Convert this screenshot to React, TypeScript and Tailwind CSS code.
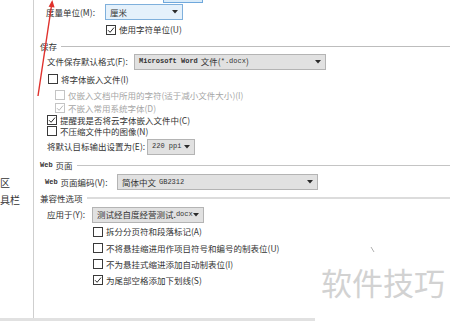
import React from "react";

const cjk = { fontFamily: '"Noto Sans CJK SC", "Noto Sans", sans-serif' };
const mono = { fontFamily: '"Liberation Mono", "DejaVu Sans Mono", monospace' };

function Check({ checked = false, disabled = false }: { checked?: boolean; disabled?: boolean }) {
  return (
    <span
      className={`flex h-[10px] w-[10px] shrink-0 items-center justify-center border bg-white ${
        disabled ? "border-[#c4c4c4]" : "border-[#3a3a3a]"
      }`}
    >
      {checked && (
        <svg width="8" height="8" viewBox="0 0 8 8">
          <path
            d="M1 4.2 L3.1 6.3 L7 1.6"
            fill="none"
            stroke={disabled ? "#b8b8b8" : "#2a2a2a"}
            strokeWidth="1"
          />
        </svg>
      )}
    </span>
  );
}

function Arrow() {
  return (
    <svg width="6" height="4" viewBox="0 0 6 4" className="shrink-0">
      <path d="M0 0 H6 L3 3.5 Z" fill="#2b2b2b" />
    </svg>
  );
}

function Select({
  width,
  active = false,
  children,
}: {
  width: string;
  active?: boolean;
  children: React.ReactNode;
}) {
  return (
    <div
      className={`flex h-[16px] items-center justify-between border pl-[4px] pr-[4px] ${width} ${
        active ? "border-[#7fb0dc] bg-[#e5f1fb]" : "border-[#b4b4b4] bg-[#e1e1e1]"
      }`}
    >
      <span className="flex items-center gap-[3px] whitespace-nowrap">{children}</span>
      <Arrow />
    </div>
  );
}

function CheckRow({
  h,
  ml,
  checked,
  disabled,
  children,
}: {
  h: string;
  ml: string;
  checked?: boolean;
  disabled?: boolean;
  children: React.ReactNode;
}) {
  return (
    <div className={`flex items-center ${h} ${ml}`}>
      <Check checked={checked} disabled={disabled} />
      <span className={`ml-[3px] whitespace-nowrap ${disabled ? "text-[#a6a6a6]" : ""}`}>{children}</span>
    </div>
  );
}

function Section({ h, label, line }: { h: string; label: React.ReactNode; line: string }) {
  return (
    <div className={`flex items-center ${h} ml-[6px]`}>
      <span className="whitespace-nowrap">{label}</span>
      <div className={`ml-[4px] flex-1 ${line}`} />
    </div>
  );
}

export default function App() {
  return (
    <div
      className="relative flex h-[321px] w-[450px] flex-col overflow-hidden bg-white text-[8.5px] leading-none text-[#333]"
      style={cjk}
    >
      <div className="flex h-[318px]">
        {/* left nav pane */}
        <div className="w-[34px] shrink-0 border-r border-[#cfcfcf] pt-[174px] text-[10px] leading-[17px] text-[#333]">
          <div>区</div>
          <div>具栏</div>
        </div>

        {/* options pane */}
        <div className="flex flex-1 flex-col">
          <div className="h-[4px]">
            <div className="ml-[129px] h-[3px] w-[40px] border border-t-0 border-[#6fa8dc] bg-[#d9ebf9]" />
          </div>

          <div className="flex h-[16px] items-center">
            <span className="ml-[12px] w-[59px] whitespace-nowrap">度量单位(M):</span>
            <Select width="w-[78px]" active>
              厘米
            </Select>
          </div>
          <CheckRow h="h-[19px]" ml="ml-[72px]" checked>
            使用字符单位(U)
          </CheckRow>

          <Section h="h-[14px]" label="保存" line="h-px bg-[#bdbdbd]" />
          <div className="flex h-[17px] items-center">
            <span className="ml-[13px] w-[87px] whitespace-nowrap">文件保存默认格式(F):</span>
            <Select width="w-[192px]">
              <span className="text-[7px] font-bold text-[#333]" style={mono}>
                Microsoft Word
              </span>
              <span>文件(</span>
              <span className="-ml-[3px] text-[7px] text-[#333]" style={mono}>
                *.docx
              </span>
              <span className="-ml-[3px]">)</span>
            </Select>
          </div>
          <CheckRow h="h-[18px]" ml="ml-[14px]">
            将字体嵌入文件(I)
          </CheckRow>
          <CheckRow h="h-[14px]" ml="ml-[21px]" disabled>
            仅嵌入文档中所用的字符(适于减小文件大小)(I)
          </CheckRow>
          <CheckRow h="h-[12px]" ml="ml-[21px]" disabled checked>
            不嵌入常用系统字体(D)
          </CheckRow>
          <CheckRow h="h-[12px]" ml="ml-[13px]" checked>
            提醒我是否将云字体嵌入文件中(C)
          </CheckRow>
          <CheckRow h="h-[10px]" ml="ml-[13px]">
            不压缩文件中的图像(N)
          </CheckRow>
          <div className="flex h-[21px] items-center">
            <span className="ml-[13px] w-[100px] whitespace-nowrap">将默认目标输出设置为(E):</span>
            <Select width="w-[48px]">
              <span className="text-[7px] text-[#333]" style={mono}>
                220 ppi
              </span>
            </Select>
          </div>

          <Section
            h="h-[17px]"
            label={
              <span className="flex items-center gap-[3px]">
                <span className="text-[7px] font-bold" style={mono}>
                  Web
                </span>
                页面
              </span>
            }
            line="h-px bg-[#c4c4c4]"
          />
          <div className="flex h-[16px] items-center">
            <span className="ml-[11px] flex w-[72px] items-center gap-[3px] whitespace-nowrap">
              <span className="text-[7px] font-bold" style={mono}>
                Web
              </span>
              页面编码(V):
            </span>
            <Select width="w-[201px]">
              <span>简体中文</span>
              <span className="text-[7px] text-[#333]" style={mono}>
                GB2312
              </span>
            </Select>
          </div>

          <Section h="h-[16px]" label="兼容性选项" line="h-[2px] bg-[#dcdcdc]" />
          <div className="flex h-[17px] items-center">
            <span className="ml-[13px] w-[45px] whitespace-nowrap">应用于(Y):</span>
            <Select width="w-[112px]">
              <span>测试经自度经营测试.</span>
              <span className="-ml-[3px] text-[7px] text-[#333]" style={mono}>
                docx
              </span>
            </Select>
          </div>
          <CheckRow h="h-[17px]" ml="ml-[59px]">
            拆分分页符和段落标记(A)
          </CheckRow>
          <CheckRow h="h-[16px]" ml="ml-[59px]">
            不将悬挂缩进用作项目符号和编号的制表位(U)
          </CheckRow>
          <CheckRow h="h-[16px]" ml="ml-[59px]">
            不为悬挂式缩进添加自动制表位(I)
          </CheckRow>
          <CheckRow h="h-[16px]" ml="ml-[59px]" checked>
            为尾部空格添加下划线(S)
          </CheckRow>
        </div>
      </div>
      <div className="h-[3px] w-[315px] bg-[#e1e1e1]" />

      {/* annotation arrow */}
      <svg className="pointer-events-none absolute left-0 top-0" width="450" height="321">
        <line x1="38" y1="96" x2="51.6" y2="5" stroke="#e0312c" strokeWidth="1.4" />
        <path d="M52.3 0 L54.6 7.6 L48.6 6.8 Z" fill="#e0312c" />
        <line x1="371" y1="247" x2="374" y2="252" stroke="#9a9a9a" strokeWidth="0.8" />
      </svg>

      {/* watermark */}
      <div className="pointer-events-none absolute left-[321px] top-[266px] text-[31px] leading-none text-[#d2d2d2]">
        软件技巧
      </div>
    </div>
  );
}
